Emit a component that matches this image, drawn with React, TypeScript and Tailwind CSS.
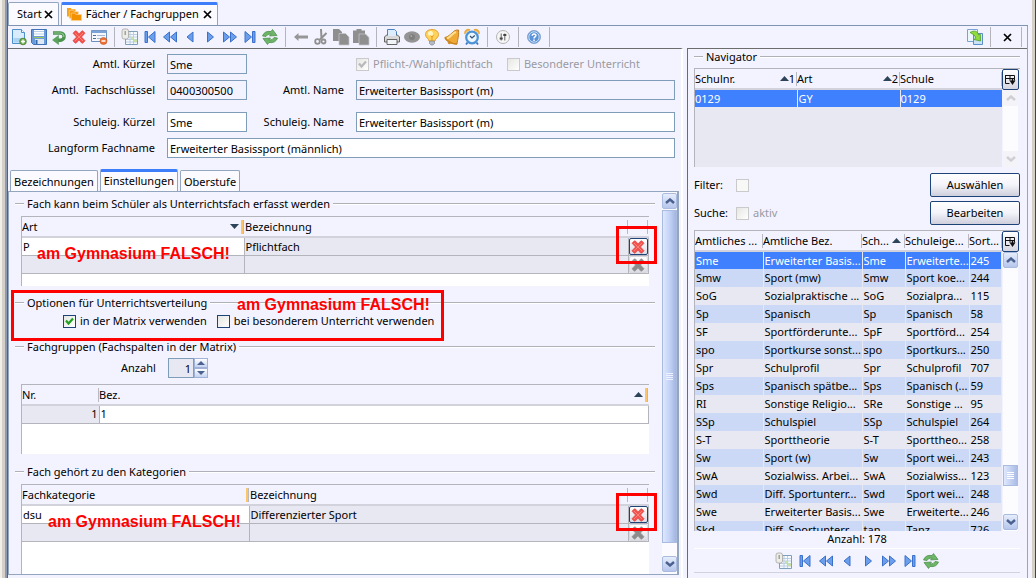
import React, { useState } from 'react';

type IconProps = { children: React.ReactNode };

const Svg = ({ children }: IconProps) => (
  <svg viewBox="0 0 16 16" className="w-4 h-4 overflow-visible">{children}</svg>
);

const NewIcon = () => (
  <Svg>
    <path d="M1.5.5h9l3 3v11h-12z" fill="#d9ecfb" stroke="#4f8fcc" />
    <path d="M10.5.5v3h3" fill="#fff" stroke="#4f8fcc" />
    <path d="M2.500 9h7v4.500h-7z" fill="#a9d2f3" />
    <circle cx="12" cy="12.5" r="3.4" fill="#6fa84e" stroke="#43792c" strokeWidth=".6" />
    <path d="M12 10.5v4M10 12.5h4" stroke="#fff" strokeWidth="1.3" />
  </Svg>
);

const SaveIcon = () => (
  <Svg>
    <path d="M.5.5h15v15h-13l-2-2z" fill="#6b9bd8" stroke="#3f72b6" />
    <path d="M3 1h10v6H3z" fill="#fff" />
    <path d="M3 2.5h10M3 5h10" stroke="#b9cfe8" />
    <path d="M4 10h9v5H4z" fill="#dfe9f3" />
    <path d="M3 8.5h10" stroke="#9dcb58" />
    <path d="M5.5 11v4" stroke="#3769ad" strokeWidth="2" />
  </Svg>
);

const UndoIcon = () => (
  <Svg>
    <path d="M2 4h7.5a3.6 3.6 0 0 1 0 7.200H7" fill="none" stroke="#4b924e" strokeWidth="3.4" />
    <path d="M7.500 6.5v9L1.500 11z" fill="#5aa55b" stroke="#4b924e" strokeWidth=".5" />
    <path d="M2.5 4h7a3.6 3.6 0 0 1 3.400 4" fill="none" stroke="#92cb92" strokeWidth="1.2" />
  </Svg>
);

const CrossIcon = ({ gray = false }: { gray?: boolean }) => (
  <Svg>
    <path
      d="M2 4.200L4.200 2q.8-.5 1.500.2L8 5l2.500-2.800q.8-.7 1.500-.1L14 4.200 10.500 8l3.600 3.800-2.200 2.200q-.8.500-1.500-.2L8 11l-2.500 2.800q-.8.700-1.500.1L1.900 11.800 5.500 8z"
      fill={gray ? '#8c8c8c' : '#f3524e'}
      stroke={gray ? '#9a9a9a' : '#e04442'}
      strokeWidth=".7"
    />
    {!gray && <path d="M4 4l8 8M12 4l-8 8" stroke="#ff8478" strokeWidth="1" />}
  </Svg>
);

const FormIcon = () => (
  <Svg>
    <path d="M.5 1.5h15v11H.5z" fill="#f4f8fd" stroke="#6a90be" />
    <path d="M.5 1.5h15V4H.5z" fill="#7ba3d6" />
    <path d="M2 6.5h3M2 9.5h3" stroke="#4a6ea0" />
    <path d="M6 6.5h8M6 9.5h5" stroke="#a5b8cf" />
    <circle cx="12.5" cy="12" r="3.5" fill="#ec7236" stroke="#c9541c" strokeWidth=".6" />
    <path d="M10.5 12h4" stroke="#fff" strokeWidth="1.5" />
  </Svg>
);

const ListIcon = () => (
  <Svg>
    <path d="M3.5 2.5h12v13h-12z" fill="#f5faff" stroke="#7f9fbd" />
    <path d="M4 5.5h11M4 8h11M4 10.5h11M4 13h11M8 3v12M11.5 3v12" stroke="#b5cbdf" strokeWidth=".9" />
    <path d="M9 8h2.500v2.500H9zM12 10.500h3V13h-3z" fill="#c5e3a4" />
    <rect x="0" y="0" width="6.5" height="10" rx="2" fill="#ecece8" stroke="#a5a5a0" strokeWidth=".8" />
    <path d="M3.200 2v4" stroke="#96968f" strokeWidth="1.3" />
  </Svg>
);

const ARROW = { fill: '#6b9fec', stroke: '#3a70ca', strokeWidth: 1 };

const FirstIcon = () => (
  <Svg><path d="M3 2.500h2.500v11H3zM13 2.500v11L6.500 8z" {...ARROW} /></Svg>
);
const RewindIcon = () => (
  <Svg><path d="M7.500 3v10L1.500 8zM14.500 3v10l-6-5z" {...ARROW} /></Svg>
);
const PrevIcon = () => (
  <Svg><path d="M11 3v10L5 8z" {...ARROW} /></Svg>
);
const NextIcon = () => (
  <Svg><path d="M5.500 3v10l6-5z" {...ARROW} /></Svg>
);
const ForwardIcon = () => (
  <Svg><path d="M1.500 3v10l6-5zM8.500 3v10l6-5z" {...ARROW} /></Svg>
);
const LastIcon = () => (
  <Svg><path d="M3 2.500v11L9.500 8zM10.500 2.500H13v11h-2.500z" {...ARROW} /></Svg>
);

const RefreshIcon = () => (
  <Svg>
    <path d="M.5 7Q2.500 1.500 9 2.500L10.500.5l4.500 6-7.500.5L9.200 5Q5.500 4.500 4 7.500z" fill="#6fb568" stroke="#438a45" strokeWidth=".7" />
    <path d="M15.500 9Q13.500 14.500 7 13.500L5.500 15.500 1 9.500 8.500 9 6.800 11Q10.500 11.500 12 8.500z" fill="#6fb568" stroke="#438a45" strokeWidth=".7" />
  </Svg>
);

const BackIcon = () => (
  <Svg><path d="M1 8l4.500-4v2.500H15v3H5.500V12z" fill="#969696" /></Svg>
);

const CutIcon = () => (
  <Svg>
    <path d="M8 0l.5 10M13.500 4L7 10.500" stroke="#909090" strokeWidth="2" />
    <circle cx="4.500" cy="12.500" r="2.300" fill="none" stroke="#909090" strokeWidth="1.800" />
    <circle cx="10.500" cy="12.500" r="2" fill="none" stroke="#909090" strokeWidth="1.800" />
  </Svg>
);

const CopyIcon = () => (
  <Svg>
    <path d="M0 0h6l3 3v9H0z" fill="#8f8f8f" />
    <path d="M6 4.500h6.500L16 8v8H6z" fill="#8f8f8f" stroke="#c9c9d0" strokeWidth=".7" />
  </Svg>
);

const PasteIcon = () => (
  <Svg>
    <path d="M0 1.500h3.500V0h5v1.500H12V14H0z" fill="#8f8f8f" />
    <path d="M6 5h6.500L16 8.500V16H6z" fill="#8f8f8f" stroke="#c9c9d0" strokeWidth=".7" />
  </Svg>
);

const PrintIcon = () => (
  <Svg>
    <path d="M3.500.5h7l2 2V8h-9z" fill="#cfe6fb" stroke="#4a84c4" />
    <path d="M.5 8l2-2h11l2 2v5H.5z" fill="#d8d8d8" stroke="#636363" />
    <path d="M4 7h8V2.500L10.500 1H4z" fill="#dcecfb" />
    <path d="M3 10.500h10v5H3z" fill="#f2f5f8" stroke="#666" />
  </Svg>
);

const EyeIcon = () => (
  <Svg>
    <ellipse cx="8" cy="8" rx="8" ry="5.700" fill="#949494" />
    <circle cx="8" cy="8" r="3" fill="#7f7f7f" />
    <circle cx="7.300" cy="7" r="1" fill="#a8a8a8" />
  </Svg>
);

const BulbIcon = () => (
  <Svg>
    <path d="M8 .5c4.200 0 6.500 2.300 6.500 5C14.500 9 11 9.500 11 12H5c0-2.500-3.500-3-3.500-6.500C1.500 2.800 3.800.5 8 .5z" fill="#ffd258" stroke="#e3a03a" />
    <circle cx="6.500" cy="4.500" r="2.500" fill="#fff5c4" />
    <path d="M8 12V7M6.500 6.500L8 8l1.500-1.500" stroke="#ea9327" fill="none" />
    <path d="M5.500 12h5v2.500L9 16H7l-1.500-1.500z" fill="#b3bac2" stroke="#7b8188" strokeWidth=".6" />
  </Svg>
);

const BellIcon = () => (
  <Svg>
    <path d="M14.500 1c-6-.5-6.500 5.500-13.500 7.500.5 3 6 6.500 12 6.500.5-5 2-7 1.500-14z" fill="#eeaa35" stroke="#bf7b20" />
    <path d="M12 3C8 4 7 8 3 9.500" stroke="#ffe092" strokeWidth="2" fill="none" />
    <path d="M1 8.500c1 3.500 7 6.500 12 6.500" fill="none" stroke="#ca8420" strokeWidth="1.500" />
    <circle cx="5.500" cy="13.500" r="1.700" fill="#cf8a24" />
  </Svg>
);

const ClockIcon = () => (
  <Svg>
    <path d="M1 5a3.500 3.500 0 0 1 5-4M15 5a3.500 3.500 0 0 0-5-4" fill="#f7c063" stroke="#e8a940" strokeWidth="1.500" />
    <path d="M3.500 13.500L2 15.500M12.500 13.500l1.500 2" stroke="#3a78bb" strokeWidth="1.800" />
    <circle cx="8" cy="8.500" r="5.800" fill="#ecf6ff" stroke="#4c92d6" strokeWidth="2.200" />
    <path d="M6 7l2 2 2.800-2.500" fill="none" stroke="#33506e" strokeWidth="1.200" />
  </Svg>
);

const SettingsIcon = () => (
  <Svg>
    <circle cx="8" cy="8" r="6.500" fill="#f6f6f6" stroke="#b3b3b3" />
    <path d="M6.200 4.500v7M9.800 4.500v7" stroke="#666" strokeWidth="1" />
    <path d="M4.700 9.500h3M8.300 6h3" stroke="#444" strokeWidth="1.800" />
  </Svg>
);

const HelpIcon = () => (
  <Svg>
    <circle cx="8" cy="8" r="6.500" fill="#5b93d8" stroke="#8aa8cf" />
    <circle cx="8" cy="8" r="5.200" fill="none" stroke="#d6e6f8" strokeWidth=".9" />
    <path d="M6.200 6.700C6.200 4.200 10 4.400 9.900 6.500 9.800 7.800 8 7.900 8 9.400M8 10.500v1.500" fill="none" stroke="#fff" strokeWidth="1.500" />
  </Svg>
);

const ExportIcon = () => (
  <Svg>
    <path d="M.5.5h10v12H.5z" fill="#eef6fd" stroke="#76a3cf" />
    <path d="M6.500 4.500h9v11h-9z" fill="#c9e2f7" stroke="#5a90c6" />
    <path d="M3 3.500c4-2.500 8-1.500 8.500 2.500l1.800-.8.200 6.800-6.500-1.500 1.700-1.500C8.200 6.500 6 5 3 3.500z" fill="#90dc3c" stroke="#4f9a26" strokeWidth=".8" />
  </Svg>
);

const FolderIcon = () => (
  <svg viewBox="0 0 16 16" className="w-[15px] h-[15px]">
    <path d="M0 1h4l1 1.500h4V10H0z" fill="#f5a21b" />
    <path d="M2.500 3.500h4l1 1.500H12v7H2.500z" fill="#f8970d" stroke="#ffd596" strokeWidth=".7" />
    <path d="M4.500 6.500h4L9.500 8h6v6.500h-11z" fill="#f39200" stroke="#ffd596" strokeWidth=".7" />
  </svg>
);

const CloseMark = () => (
  <svg viewBox="0 0 9 9" className="w-[9px] h-[9px]"><path d="M1 1l7 7M8 1L1 8" stroke="#000" strokeWidth="1.700" /></svg>
);

const ColumnsIcon = () => (
  <svg viewBox="0 0 11 12" className="w-[11px] h-3">
    <path d="M.5 1.500h9v5M.5 1v8.500h4M.5 4.500h9M5 1.500v5" fill="none" stroke="#111" />
    <path d="M4.500 6.500h6L7.500 11z" fill="#111" />
    <path d="M7.500 4v4" stroke="#111" strokeWidth="1.500" />
  </svg>
);

const Chevron = ({ down = false, muted = false }: { down?: boolean; muted?: boolean }) => (
  <svg viewBox="0 0 10 6" className="w-[10px] h-[6px]">
    <path d={down ? 'M1 1l4 3.500L9 1' : 'M1 5l4-3.500L9 5'} fill="none" stroke={muted ? '#cfcfd3' : '#4b6190'} strokeWidth="2.400" />
  </svg>
);

const SortMark = ({ down = false }: { down?: boolean }) => (
  <svg viewBox="0 0 9 5" className="w-[9px] h-[5px] shrink-0">
    <path d={down ? 'M0 0h9L4.500 5z' : 'M0 5h9L4.500 0z'} fill="#2c4358" />
  </svg>
);

const ToolButton = ({ label, children }: { label: string; children: React.ReactNode }) => (
  <button type="button" aria-label={label} className="w-5 h-5 flex items-center justify-center shrink-0">{children}</button>
);

const Separator = () => (
  <div className="w-[11px] h-5 flex justify-center shrink-0"><div className="w-px bg-[#b4b4bc]" /></div>
);

const Group = ({ title, className = '', children }: { title: string; className?: string; children?: React.ReactNode }) => (
  <fieldset className={`min-w-0 relative ${className}`}>
    <legend className="w-full flex items-center h-4 gap-[3px]">
      <span className="w-[9px] h-[2px] bg-[#b0b0b8] border-b border-white" />
      <span className="whitespace-nowrap">{title}</span>
      <span className="flex-1 h-[2px] bg-[#b0b0b8] border-b border-white" />
    </legend>
    {children}
  </fieldset>
);

const Field = ({ id, label, value, tinted = false }: { id: string; label: string; value: string; tinted?: boolean }) => (
  <>
    <label htmlFor={id} className="text-right whitespace-pre">{label}</label>
    <input
      id={id}
      defaultValue={value}
      className={`w-full min-w-0 h-5 px-[2px] border border-[#7f9db9] outline-none ${tinted ? 'bg-[#f3f3ff]' : 'bg-white'}`}
    />
  </>
);

const Check = ({ label, checked = false, disabled = false }: { label: string; checked?: boolean; disabled?: boolean }) => {
  const [on, setOn] = useState(checked);
  return (
    <label className={`flex items-center gap-1 whitespace-nowrap ${disabled ? 'text-[#9a9aa0]' : ''}`}>
      <span className="relative w-[13px] h-[13px] shrink-0">
        <input
          type="checkbox"
          aria-label={label}
          checked={on}
          disabled={disabled}
          onChange={e => setOn(e.target.checked)}
          className={`appearance-none block w-[13px] h-[13px] border bg-linear-to-br from-[#e6e6e2] to-white ${disabled ? 'border-[#cacacc]' : 'border-[#1d4378]'}`}
        />
        {on && (
          <svg viewBox="0 0 13 13" className="absolute inset-0 w-[13px] h-[13px] pointer-events-none">
            <path d="M3 5.500l2.500 3L10 3.500" fill="none" stroke={disabled ? '#b9b9bd' : '#21a121'} strokeWidth="2.200" />
          </svg>
        )}
      </span>
      {label}
    </label>
  );
};

const Note = ({ className }: { className: string }) => (
  <span className={`absolute whitespace-nowrap font-['Liberation_Sans',sans-serif] font-bold text-base leading-5 text-[#f00] pointer-events-none ${className}`}>
    am Gymnasium FALSCH!
  </span>
);

const HEAD = 'relative h-5 p-0 font-normal text-left align-middle whitespace-nowrap overflow-hidden';
const HEAD_ROW = 'bg-[#f3f3ff] border-b-2 border-[#d2d2dc]';

const Tick = ({ orange = false }: { orange?: boolean }) => (
  <span className={`absolute right-0 top-[3px] h-[14px] border-r border-[#b9b9c2] ${orange ? 'w-[3px] bg-[#fdc468]' : 'w-px'}`} />
);

type DeleteTableProps = { first: string; value: string; text: string; sorted?: boolean; split: 'art' | 'kategorie' };

const DeleteTable = ({ first, value, text, sorted = false, split }: DeleteTableProps) => (
  <table className="w-full table-fixed border-collapse">
    <colgroup>
      <col className={split === 'art' ? 'w-[222px]' : 'w-[227px]'} />
      <col />
      <col className="w-5" />
      <col className="w-px" />
    </colgroup>
    <thead>
      <tr className={HEAD_ROW}>
        <th className={HEAD}>
          <span className="flex items-center justify-between pr-[5px]">{first}{sorted && <SortMark down />}</span>
          <Tick orange />
        </th>
        <th className={HEAD}><span className="pl-px">Bezeichnung</span><Tick /></th>
        <th className={HEAD}><Tick /></th>
        <th className="p-0" />
      </tr>
    </thead>
    <tbody>
      {[true, false].map(filled => (
        <tr key={String(filled)} className="h-[18px] bg-[#e8e8f2]">
          <td className={`p-0 pl-px border-r border-b border-[#b4b4bc] ${filled ? 'bg-white' : ''}`}>{filled ? value : ''}</td>
          <td className="p-0 pl-px border-r border-b border-[#b4b4bc]">{filled ? text : ''}</td>
          <td className="p-0 border-r border-b border-[#b4b4bc]">
            <button
              type="button"
              aria-label={`${first} löschen`}
              disabled={!filled}
              className={`w-[19px] h-[17px] flex items-center justify-center border rounded-[2px] bg-linear-to-b from-white to-[#dcdce6] ${filled ? 'border-[#1d4378]' : 'border-[#d8d8de]'}`}
            >
              <CrossIcon gray={!filled} />
            </button>
          </td>
          <td className="p-0 bg-white" />
        </tr>
      ))}
    </tbody>
  </table>
);

const SCROLL_BTN = 'w-full h-4 shrink-0 flex items-center justify-center';
const SCROLL_ON = 'border border-[#a9bbdf] rounded-[2px] bg-linear-to-b from-[#e6edfc] to-[#b6c6ec]';

const subjects = [
  ['Sme', 'Erweiterter Basis...', 'Sme', 'Erweiterte...', '245'],
  ['Smw', 'Sport (mw)', 'Smw', 'Sport koe...', '244'],
  ['SoG', 'Sozialpraktische ...', 'SoG', 'Sozialpra...', '115'],
  ['Sp', 'Spanisch', 'Sp', 'Spanisch', '58'],
  ['SF', 'Sportförderunte...', 'SpF', 'Sportförd...', '254'],
  ['spo', 'Sportkurse sonst...', 'spo', 'Sportkurs...', '250'],
  ['Spr', 'Schulprofil', 'Spr', 'Schulprofil', '707'],
  ['Sps', 'Spanisch spätbe...', 'Sps', 'Spanisch (...', '59'],
  ['RI', 'Sonstige Religio...', 'SRe', 'Sonstige ...', '95'],
  ['SSp', 'Schulspiel', 'SSp', 'Schulspiel', '264'],
  ['S-T', 'Sporttheorie', 'S-T', 'Sporttheo...', '258'],
  ['Sw', 'Sport (w)', 'Sw', 'Sport wei...', '243'],
  ['SwA', 'Sozialwiss. Arbei...', 'SwA', 'Sozialwiss...', '123'],
  ['Swd', 'Diff. Sportunterr...', 'Swd', 'Sport wei...', '248'],
  ['Swe', 'Erweiterter Basis...', 'Swe', 'Erweiterte...', '246'],
  ['Skd', 'Diff. Sportunterr...', 'tan', 'Tanz', '726'],
];

const NavIcons = () => (
  <>
    <ToolButton label="Liste"><ListIcon /></ToolButton>
    <ToolButton label="Erster"><FirstIcon /></ToolButton>
    <ToolButton label="Seite zurück"><RewindIcon /></ToolButton>
    <ToolButton label="Zurück"><PrevIcon /></ToolButton>
    <ToolButton label="Weiter"><NextIcon /></ToolButton>
    <ToolButton label="Seite vor"><ForwardIcon /></ToolButton>
    <ToolButton label="Letzter"><LastIcon /></ToolButton>
    <ToolButton label="Aktualisieren"><RefreshIcon /></ToolButton>
  </>
);

const Toolbar = () => (
  <div className="flex items-center h-[22px] pl-px">
    <ToolButton label="Neu"><NewIcon /></ToolButton>
    <ToolButton label="Speichern"><SaveIcon /></ToolButton>
    <ToolButton label="Rückgängig"><UndoIcon /></ToolButton>
    <ToolButton label="Löschen"><CrossIcon /></ToolButton>
    <ToolButton label="Formular"><FormIcon /></ToolButton>
    <Separator />
    <NavIcons />
    <Separator />
    <ToolButton label="Zurückgehen"><BackIcon /></ToolButton>
    <ToolButton label="Ausschneiden"><CutIcon /></ToolButton>
    <ToolButton label="Kopieren"><CopyIcon /></ToolButton>
    <ToolButton label="Einfügen"><PasteIcon /></ToolButton>
    <Separator />
    <ToolButton label="Drucken"><PrintIcon /></ToolButton>
    <ToolButton label="Vorschau"><EyeIcon /></ToolButton>
    <ToolButton label="Tipp"><BulbIcon /></ToolButton>
    <ToolButton label="Hinweis"><BellIcon /></ToolButton>
    <ToolButton label="Wiedervorlage"><ClockIcon /></ToolButton>
    <Separator />
    <ToolButton label="Optionen"><SettingsIcon /></ToolButton>
    <Separator />
    <ToolButton label="Hilfe"><HelpIcon /></ToolButton>
    <Separator />
    <div className="flex items-center ml-auto">
      <ToolButton label="Exportieren"><ExportIcon /></ToolButton>
      <Separator />
      <button type="button" aria-label="Schließen" className="w-5 h-5 flex items-center justify-end pr-1"><CloseMark /></button>
      <Separator />
    </div>
  </div>
);

const Settings = () => (
  <div className="flex-1 min-w-0 pl-[6px] pr-[7px] pt-1 overflow-hidden">
    <Group title="Fach kann beim Schüler als Unterrichtsfach erfasst werden">
      <div className="h-[70px] mt-1 mx-[6px] border-t border-l border-[#b4b4bc] bg-white">
        <DeleteTable first="Art" value="P" text="Pflichtfach" sorted split="art" />
      </div>
      <Note className="left-[22px] top-8" />
      <div className="absolute right-[-2px] top-[14px] w-[41px] h-[38px] border-3 border-[#f00] pointer-events-none" />
    </Group>

    <Group title="Optionen für Unterrichtsverteilung" className="mt-[9px]">
      <div className="flex items-center h-5 gap-[10px] pl-12">
        <Check label="in der Matrix verwenden" checked />
        <Check label="bei besonderem Unterricht verwenden" />
      </div>
      <Note className="left-[222px] top-[-16px]" />
      <div className="absolute left-[-4px] top-[-21px] w-[433px] h-[51px] border-3 border-[#f00] pointer-events-none" />
    </Group>

    <Group title="Fachgruppen (Fachspalten in der Matrix)" className="mt-2">
      <div className="flex items-center h-5 mt-[3px] pl-[106px]">
        <label htmlFor="anzahl" className="w-[47px]">Anzahl</label>
        <input id="anzahl" defaultValue="1" className="w-[26px] h-5 px-[2px] text-right bg-[#e8e8f2] border border-[#7f9db9] outline-none" />
        <div className="w-[14px] h-5 flex flex-col">
          <button type="button" aria-label="Mehr" className="flex-1 flex items-center justify-center border border-[#a0b2d8] bg-linear-to-b from-white to-[#c4d2f2]"><svg viewBox="0 0 8 4" className="w-2 h-1"><path d="M0 4h8L4 0z" fill="#4b6190" /></svg></button>
          <button type="button" aria-label="Weniger" className="flex-1 flex items-center justify-center border border-[#a0b2d8] bg-linear-to-b from-white to-[#c4d2f2]"><svg viewBox="0 0 8 4" className="w-2 h-1"><path d="M0 0h8L4 4z" fill="#4b6190" /></svg></button>
        </div>
      </div>
      <div className="h-[70px] mt-[6px] mx-[6px] border-t border-l border-[#b4b4bc] bg-white">
        <table className="w-full table-fixed border-collapse">
          <colgroup>
            <col className="w-[77px]" />
            <col />
            <col className="w-px" />
          </colgroup>
          <thead>
            <tr className={HEAD_ROW}>
              <th className={HEAD}>Nr.<Tick /></th>
              <th className={HEAD}>
                <span className="flex items-center justify-between pr-[5px]">Bez.<SortMark /></span>
                <Tick orange />
              </th>
              <th className="p-0" />
            </tr>
          </thead>
          <tbody>
            <tr className="h-[18px]">
              <td className="p-0 pr-px text-right bg-[#e8e8f2] border-r border-b border-[#b4b4bc]">1</td>
              <td className="p-0 pl-px border-r border-b border-[#b4b4bc]">1</td>
              <td className="p-0" />
            </tr>
          </tbody>
        </table>
      </div>
    </Group>

    <Group title="Fach gehört zu den Kategorien" className="mt-[10px]">
      <div className="h-[100px] mt-1 mx-[6px] border-t border-l border-[#b4b4bc] bg-white">
        <DeleteTable first="Fachkategorie" value="dsu" text="Differenzierter Sport" split="kategorie" />
      </div>
      <Note className="left-[33px] top-8" />
      <div className="absolute right-[-2px] top-[13px] w-[41px] h-[38px] border-3 border-[#f00] pointer-events-none" />
    </Group>
  </div>
);

const TAB = 'px-[3px] border border-b-0 border-[#93a5bf] rounded-t-[2px] bg-[#fafaff]';

const Editor = () => (
  <main className="flex-1 min-w-0 flex flex-col border-t border-[#6c6c6c] border-r-2 border-r-white pr-[2px] pb-[3px]">
    <form className="grid grid-cols-[147px_80px_85px_1fr] gap-x-3 gap-y-[6px] items-center pt-[5px] pr-1">
      <Field id="kuerzel" label="Amtl. Kürzel" value="Sme" tinted />
      <span />
      <div className="flex gap-[14px]">
        <Check label="Pflicht-/Wahlpflichtfach" checked disabled />
        <Check label="Besonderer Unterricht" disabled />
      </div>
      <Field id="schluessel" label="Amtl.  Fachschlüssel" value="0400300500" tinted />
      <Field id="name" label="Amtl. Name" value="Erweiterter Basissport (m)" tinted />
      <div className="col-span-4 grid grid-cols-subgrid gap-y-[6px] items-center pt-[6px]">
        <Field id="skuerzel" label="Schuleig. Kürzel" value="Sme" />
        <Field id="sname" label="Schuleig. Name" value="Erweiterter Basissport (m)" />
        <label htmlFor="langform" className="text-right">Langform Fachname</label>
        <input id="langform" defaultValue="Erweiterter Basissport (männlich)" className="col-span-3 w-full h-5 px-[2px] bg-white border border-[#7f9db9] outline-none" />
      </div>
    </form>

    <div className="flex items-end h-[22px] gap-[2px] mt-[11px] pl-[2px]">
      <button type="button" className={`${TAB} h-[21px] pt-[2px]`}>Bezeichnungen</button>
      <button type="button" className={`${TAB} h-[22px] pb-[2px] border-t-3 border-t-[#3d7dfa]`}>Einstellungen</button>
      <button type="button" className={`${TAB} h-[21px] pt-[2px]`}>Oberstufe</button>
    </div>
    <div className="flex-1 min-h-0 flex border border-r-2 border-[#93a5bf]">
      <Settings />
      <div className="w-[15px] flex flex-col pt-px pb-[2px] bg-[#fafaff]">
        <button type="button" aria-label="Nach oben" className={`${SCROLL_BTN} ${SCROLL_ON}`}><Chevron /></button>
        <div className="h-[333px] mt-px flex flex-col items-center justify-center gap-px border border-[#a9bbdf] bg-linear-to-r from-[#dfe8fd] via-[#c3d3f7] to-[#a3b5e0]">
          <span className="w-[7px] h-px bg-[#eef3ff]" />
          <span className="w-[7px] h-px bg-[#eef3ff]" />
          <span className="w-[7px] h-px bg-[#eef3ff]" />
          <span className="w-[7px] h-px bg-[#eef3ff]" />
        </div>
        <button type="button" aria-label="Nach unten" className={`${SCROLL_BTN} ${SCROLL_ON} mt-auto`}><Chevron down /></button>
      </div>
    </div>
  </main>
);

const ColumnsButton = () => (
  <button type="button" aria-label="Spalten" className="w-[17px] h-[21px] shrink-0 flex items-center justify-center border border-[#1d4378] rounded-[2px] bg-linear-to-b from-white to-[#d6d6e2]">
    <ColumnsIcon />
  </button>
);

const NAV_BTN = 'w-[90px] h-6 text-center border border-[#1d4378] rounded-[2px] bg-linear-to-b from-white via-[#f3f3fa] to-[#cfcfdd]';

const Navigator = () => (
  <aside className="w-[340px] shrink-0 flex flex-col border-t border-l border-[#6c6c6c] pl-[6px] pr-[7px] pb-[5px]">
    <Group title="Navigator" />
    <div className="flex h-[99px] mt-[3px] border-t border-l border-[#b4b4bc]">
      <div className="flex-1 min-w-0 bg-[#e8e8f2]">
        <table className="w-full table-fixed border-collapse">
          <colgroup>
            <col className="w-[102px]" />
            <col className="w-[103px]" />
            <col />
          </colgroup>
          <thead>
            <tr className={HEAD_ROW}>
              <th className={HEAD}><span className="flex items-center pr-[2px]"><span className="flex-1">Schulnr.</span><SortMark />1</span><Tick /></th>
              <th className={HEAD}><span className="flex items-center pr-[2px]"><span className="flex-1">Art</span><SortMark />2</span><Tick /></th>
              <th className={HEAD}>Schule<Tick /></th>
            </tr>
          </thead>
          <tbody>
            <tr className="h-[18px] bg-[#3f80ff] text-white">
              <td className="p-0 border-r border-[#e8e8f2]">0129</td>
              <td className="p-0 pl-px border-r border-[#e8e8f2]">GY</td>
              <td className="p-0">0129</td>
            </tr>
          </tbody>
        </table>
      </div>
      <div className="w-[18px] flex flex-col">
        <ColumnsButton />
        <div className="flex-1 w-[15px] ml-px flex flex-col justify-between bg-[#fcfcff]">
          <button type="button" aria-label="Schulen nach oben" className={`${SCROLL_BTN} bg-[#f3f3f8]`}><Chevron muted /></button>
          <button type="button" aria-label="Schulen nach unten" className={`${SCROLL_BTN} bg-[#f3f3f8]`}><Chevron down muted /></button>
        </div>
      </div>
    </div>

    <div className="flex flex-col gap-1 mt-[6px]">
      <div className="flex items-center">
        <label htmlFor="filter" className="w-[42px]">Filter:</label>
        <input id="filter" type="checkbox" disabled className="appearance-none w-[13px] h-[13px] border border-[#cacacc] bg-[#f8f8f6]" />
        <button type="button" className={`${NAV_BTN} ml-auto`}>Auswählen</button>
      </div>
      <div className="flex items-center">
        <span className="w-[42px]">Suche:</span>
        <Check label="aktiv" disabled />
        <button type="button" className={`${NAV_BTN} ml-auto`}>Bearbeiten</button>
      </div>
    </div>

    <div className="flex-1 min-h-0 flex mt-[5px] border-t border-l border-[#b4b4bc] overflow-hidden">
      <div className="flex-1 min-w-0">
        <table className="w-full table-fixed border-collapse">
          <colgroup>
            <col className="w-[68px]" />
            <col className="w-[99px]" />
            <col className="w-[43px]" />
            <col className="w-[64px]" />
            <col />
          </colgroup>
          <thead>
            <tr className={HEAD_ROW}>
              <th className={HEAD}>Amtliches ...<Tick /></th>
              <th className={HEAD}>Amtliche Bez.<Tick /></th>
              <th className={HEAD}><span className="flex items-center justify-between pr-1">Sch...<SortMark /></span><Tick /></th>
              <th className={HEAD}>Schuleige...<Tick /></th>
              <th className={HEAD}>Sort...<Tick /></th>
            </tr>
          </thead>
          <tbody>
            {subjects.map((row, i) => (
              <tr key={i} className={`h-[18px] ${i === 0 ? 'bg-[#3f80ff] text-white' : i % 2 ? 'bg-[#cbd9f6]' : 'bg-[#e8e8f2]'}`}>
                {row.map((cell, j) => (
                  <td key={j} className="p-0 pl-px border-r border-[#e8e8f2] whitespace-nowrap overflow-hidden">{cell}</td>
                ))}
              </tr>
            ))}
          </tbody>
        </table>
      </div>
      <div className="w-[18px] flex flex-col">
        <ColumnsButton />
        <div className="flex-1 w-[15px] ml-px flex flex-col bg-[#fcfcff]">
          <button type="button" aria-label="Fächer nach oben" className={`${SCROLL_BTN} ${SCROLL_ON}`}><Chevron /></button>
          <div className="flex-1" />
          <div className="h-[21px] flex flex-col items-center justify-center gap-px border border-[#a9bbdf] bg-linear-to-r from-[#dfe8fd] to-[#a9bbe6]">
            <span className="w-[7px] h-px bg-white" />
            <span className="w-[7px] h-px bg-white" />
            <span className="w-[7px] h-px bg-white" />
            <span className="w-[7px] h-px bg-white" />
          </div>
          <button type="button" aria-label="Fächer nach unten" className={`${SCROLL_BTN} ${SCROLL_ON} mt-7 mb-px`}><Chevron down /></button>
        </div>
      </div>
    </div>
    <div className="h-[18px] leading-4 text-center border-b border-white">Anzahl: 178</div>
    <div className="h-6 flex items-center justify-center gap-px border-b border-[#d2d2de]"><NavIcons /></div>
  </aside>
);

export default function App() {
  return (
    <div className="h-screen flex overflow-hidden bg-[#f3f3ff] text-black text-[11px] leading-4 font-['Noto_Sans',sans-serif]">
      <div className="w-[5px] shrink-0 bg-[#d4d0c8] border-l-2 border-[#f1efe9]" />
      <div className="w-[3px] shrink-0 bg-[#8c9ab4] border-r border-[#55607a]" />
      <div className="flex-1 min-w-0 flex flex-col">
        <nav className="flex items-end h-[26px] gap-[2px] border-b border-[#7f93b2]">
          <div className="flex items-center h-[23px] pl-2 pr-[5px] gap-[2px] border border-b-0 border-[#93a5bf] rounded-t-[2px] bg-[#fafaff]">
            <button type="button">Start</button>
            <button type="button" aria-label="Start schließen"><CloseMark /></button>
          </div>
          <div className="flex items-center h-[23px] px-[5px] pb-[2px] gap-1 border border-b-0 border-t-3 border-[#93a5bf] border-t-[#3d7dfa] rounded-t-[2px] bg-[#fafaff]">
            <FolderIcon />
            <button type="button">Fächer / Fachgruppen</button>
            <button type="button" aria-label="Fächer schließen"><CloseMark /></button>
          </div>
        </nav>
        <div className="flex-1 min-h-0 flex flex-col border-r border-[#93a5bf]">
          <Toolbar />
          <div className="flex-1 min-h-0 flex gap-1">
            <Editor />
            <Navigator />
          </div>
        </div>
      </div>
      <div className="w-1 shrink-0" />
      <div className="w-1 shrink-0 bg-[#d4d0c8] border-r border-[#444]" />
    </div>
  );
}
